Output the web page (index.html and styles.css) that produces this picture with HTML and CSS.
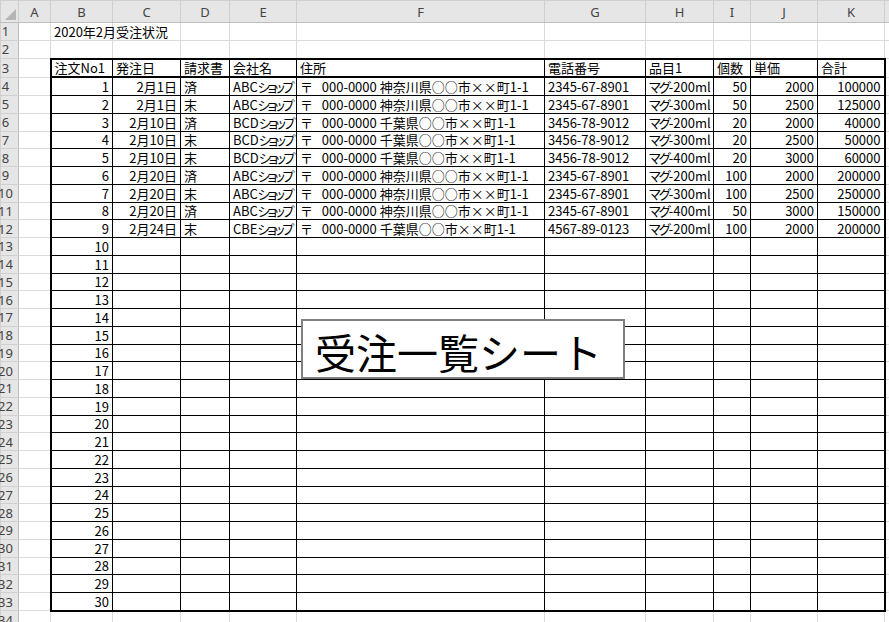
FILE: index.html
```html
<!DOCTYPE html>
<html lang="ja">
<head>
<meta charset="utf-8">
<link rel="stylesheet" href="styles.css">
</head>
<body>
<div class="sheet">
<table class="grid">
<colgroup>
<col class="c-rh"><col class="c-a"><col class="c-b"><col class="c-c"><col class="c-d"><col class="c-e"><col class="c-f"><col class="c-g"><col class="c-h"><col class="c-i"><col class="c-j"><col class="c-k"><col class="c-l">
</colgroup>
<tr class="hdr">
<th class="corner"><span class="tri"></span></th><th>A</th><th>B</th><th>C</th><th>D</th><th>E</th><th>F</th><th>G</th><th>H</th><th>I</th><th>J</th><th>K</th><th></th>
</tr>
<tr><th class="rh"><span>1</span></th><td></td><td class="l">2020年2月受注状況</td><td></td><td></td><td></td><td></td><td></td><td></td><td></td><td></td><td></td><td></td></tr>
<tr><th class="rh"><span>2</span></th><td></td><td></td><td></td><td></td><td></td><td></td><td></td><td></td><td></td><td></td><td></td><td></td></tr>
<tr class="head"><th class="rh"><span>3</span></th><td></td><td class="t l first">注文No1</td><td class="t l">発注日</td><td class="t l">請求書</td><td class="t l">会社名</td><td class="t l">住所</td><td class="t l">電話番号</td><td class="t l">品目1</td><td class="t l">個数</td><td class="t l">単価</td><td class="t l last">合計</td><td></td></tr>
<tr><th class="rh"><span>4</span></th><td></td><td class="t r first">1</td><td class="t r">2月1日</td><td class="t l">済</td><td class="t l">ABC<span class="kana">ショップ</span></td><td class="t l">〒&nbsp;&nbsp;&nbsp;000-0000 神奈川県○○市××町1-1</td><td class="t l">2345-67-8901</td><td class="t l"><span class="kana2">マグ</span>-200ml</td><td class="t r">50</td><td class="t r">2000</td><td class="t r last">100000</td><td></td></tr>
<tr><th class="rh"><span>5</span></th><td></td><td class="t r first">2</td><td class="t r">2月1日</td><td class="t l">末</td><td class="t l">ABC<span class="kana">ショップ</span></td><td class="t l">〒&nbsp;&nbsp;&nbsp;000-0000 神奈川県○○市××町1-1</td><td class="t l">2345-67-8901</td><td class="t l"><span class="kana2">マグ</span>-300ml</td><td class="t r">50</td><td class="t r">2500</td><td class="t r last">125000</td><td></td></tr>
<tr><th class="rh"><span>6</span></th><td></td><td class="t r first">3</td><td class="t r">2月10日</td><td class="t l">済</td><td class="t l">BCD<span class="kana">ショップ</span></td><td class="t l">〒&nbsp;&nbsp;&nbsp;000-0000 千葉県○○市××町1-1</td><td class="t l">3456-78-9012</td><td class="t l"><span class="kana2">マグ</span>-200ml</td><td class="t r">20</td><td class="t r">2000</td><td class="t r last">40000</td><td></td></tr>
<tr><th class="rh"><span>7</span></th><td></td><td class="t r first">4</td><td class="t r">2月10日</td><td class="t l">末</td><td class="t l">BCD<span class="kana">ショップ</span></td><td class="t l">〒&nbsp;&nbsp;&nbsp;000-0000 千葉県○○市××町1-1</td><td class="t l">3456-78-9012</td><td class="t l"><span class="kana2">マグ</span>-300ml</td><td class="t r">20</td><td class="t r">2500</td><td class="t r last">50000</td><td></td></tr>
<tr><th class="rh"><span>8</span></th><td></td><td class="t r first">5</td><td class="t r">2月10日</td><td class="t l">末</td><td class="t l">BCD<span class="kana">ショップ</span></td><td class="t l">〒&nbsp;&nbsp;&nbsp;000-0000 千葉県○○市××町1-1</td><td class="t l">3456-78-9012</td><td class="t l"><span class="kana2">マグ</span>-400ml</td><td class="t r">20</td><td class="t r">3000</td><td class="t r last">60000</td><td></td></tr>
<tr><th class="rh"><span>9</span></th><td></td><td class="t r first">6</td><td class="t r">2月20日</td><td class="t l">済</td><td class="t l">ABC<span class="kana">ショップ</span></td><td class="t l">〒&nbsp;&nbsp;&nbsp;000-0000 神奈川県○○市××町1-1</td><td class="t l">2345-67-8901</td><td class="t l"><span class="kana2">マグ</span>-200ml</td><td class="t r">100</td><td class="t r">2000</td><td class="t r last">200000</td><td></td></tr>
<tr><th class="rh"><span>10</span></th><td></td><td class="t r first">7</td><td class="t r">2月20日</td><td class="t l">末</td><td class="t l">ABC<span class="kana">ショップ</span></td><td class="t l">〒&nbsp;&nbsp;&nbsp;000-0000 神奈川県○○市××町1-1</td><td class="t l">2345-67-8901</td><td class="t l"><span class="kana2">マグ</span>-300ml</td><td class="t r">100</td><td class="t r">2500</td><td class="t r last">250000</td><td></td></tr>
<tr><th class="rh"><span>11</span></th><td></td><td class="t r first">8</td><td class="t r">2月20日</td><td class="t l">済</td><td class="t l">ABC<span class="kana">ショップ</span></td><td class="t l">〒&nbsp;&nbsp;&nbsp;000-0000 神奈川県○○市××町1-1</td><td class="t l">2345-67-8901</td><td class="t l"><span class="kana2">マグ</span>-400ml</td><td class="t r">50</td><td class="t r">3000</td><td class="t r last">150000</td><td></td></tr>
<tr><th class="rh"><span>12</span></th><td></td><td class="t r first">9</td><td class="t r">2月24日</td><td class="t l">末</td><td class="t l">CBE<span class="kana">ショップ</span></td><td class="t l">〒&nbsp;&nbsp;&nbsp;000-0000 千葉県○○市××町1-1</td><td class="t l">4567-89-0123</td><td class="t l"><span class="kana2">マグ</span>-200ml</td><td class="t r">100</td><td class="t r">2000</td><td class="t r last">200000</td><td></td></tr>
<tr><th class="rh"><span>13</span></th><td></td><td class="t r first">10</td><td class="t"></td><td class="t"></td><td class="t"></td><td class="t"></td><td class="t"></td><td class="t"></td><td class="t"></td><td class="t"></td><td class="t last"></td><td></td></tr>
<tr><th class="rh"><span>14</span></th><td></td><td class="t r first">11</td><td class="t"></td><td class="t"></td><td class="t"></td><td class="t"></td><td class="t"></td><td class="t"></td><td class="t"></td><td class="t"></td><td class="t last"></td><td></td></tr>
<tr><th class="rh"><span>15</span></th><td></td><td class="t r first">12</td><td class="t"></td><td class="t"></td><td class="t"></td><td class="t"></td><td class="t"></td><td class="t"></td><td class="t"></td><td class="t"></td><td class="t last"></td><td></td></tr>
<tr><th class="rh"><span>16</span></th><td></td><td class="t r first">13</td><td class="t"></td><td class="t"></td><td class="t"></td><td class="t"></td><td class="t"></td><td class="t"></td><td class="t"></td><td class="t"></td><td class="t last"></td><td></td></tr>
<tr><th class="rh"><span>17</span></th><td></td><td class="t r first">14</td><td class="t"></td><td class="t"></td><td class="t"></td><td class="t"></td><td class="t"></td><td class="t"></td><td class="t"></td><td class="t"></td><td class="t last"></td><td></td></tr>
<tr><th class="rh"><span>18</span></th><td></td><td class="t r first">15</td><td class="t"></td><td class="t"></td><td class="t"></td><td class="t"></td><td class="t"></td><td class="t"></td><td class="t"></td><td class="t"></td><td class="t last"></td><td></td></tr>
<tr><th class="rh"><span>19</span></th><td></td><td class="t r first">16</td><td class="t"></td><td class="t"></td><td class="t"></td><td class="t"></td><td class="t"></td><td class="t"></td><td class="t"></td><td class="t"></td><td class="t last"></td><td></td></tr>
<tr><th class="rh"><span>20</span></th><td></td><td class="t r first">17</td><td class="t"></td><td class="t"></td><td class="t"></td><td class="t"></td><td class="t"></td><td class="t"></td><td class="t"></td><td class="t"></td><td class="t last"></td><td></td></tr>
<tr><th class="rh"><span>21</span></th><td></td><td class="t r first">18</td><td class="t"></td><td class="t"></td><td class="t"></td><td class="t"></td><td class="t"></td><td class="t"></td><td class="t"></td><td class="t"></td><td class="t last"></td><td></td></tr>
<tr><th class="rh"><span>22</span></th><td></td><td class="t r first">19</td><td class="t"></td><td class="t"></td><td class="t"></td><td class="t"></td><td class="t"></td><td class="t"></td><td class="t"></td><td class="t"></td><td class="t last"></td><td></td></tr>
<tr><th class="rh"><span>23</span></th><td></td><td class="t r first">20</td><td class="t"></td><td class="t"></td><td class="t"></td><td class="t"></td><td class="t"></td><td class="t"></td><td class="t"></td><td class="t"></td><td class="t last"></td><td></td></tr>
<tr><th class="rh"><span>24</span></th><td></td><td class="t r first">21</td><td class="t"></td><td class="t"></td><td class="t"></td><td class="t"></td><td class="t"></td><td class="t"></td><td class="t"></td><td class="t"></td><td class="t last"></td><td></td></tr>
<tr><th class="rh"><span>25</span></th><td></td><td class="t r first">22</td><td class="t"></td><td class="t"></td><td class="t"></td><td class="t"></td><td class="t"></td><td class="t"></td><td class="t"></td><td class="t"></td><td class="t last"></td><td></td></tr>
<tr><th class="rh"><span>26</span></th><td></td><td class="t r first">23</td><td class="t"></td><td class="t"></td><td class="t"></td><td class="t"></td><td class="t"></td><td class="t"></td><td class="t"></td><td class="t"></td><td class="t last"></td><td></td></tr>
<tr><th class="rh"><span>27</span></th><td></td><td class="t r first">24</td><td class="t"></td><td class="t"></td><td class="t"></td><td class="t"></td><td class="t"></td><td class="t"></td><td class="t"></td><td class="t"></td><td class="t last"></td><td></td></tr>
<tr><th class="rh"><span>28</span></th><td></td><td class="t r first">25</td><td class="t"></td><td class="t"></td><td class="t"></td><td class="t"></td><td class="t"></td><td class="t"></td><td class="t"></td><td class="t"></td><td class="t last"></td><td></td></tr>
<tr><th class="rh"><span>29</span></th><td></td><td class="t r first">26</td><td class="t"></td><td class="t"></td><td class="t"></td><td class="t"></td><td class="t"></td><td class="t"></td><td class="t"></td><td class="t"></td><td class="t last"></td><td></td></tr>
<tr><th class="rh"><span>30</span></th><td></td><td class="t r first">27</td><td class="t"></td><td class="t"></td><td class="t"></td><td class="t"></td><td class="t"></td><td class="t"></td><td class="t"></td><td class="t"></td><td class="t last"></td><td></td></tr>
<tr><th class="rh"><span>31</span></th><td></td><td class="t r first">28</td><td class="t"></td><td class="t"></td><td class="t"></td><td class="t"></td><td class="t"></td><td class="t"></td><td class="t"></td><td class="t"></td><td class="t last"></td><td></td></tr>
<tr><th class="rh"><span>32</span></th><td></td><td class="t r first">29</td><td class="t"></td><td class="t"></td><td class="t"></td><td class="t"></td><td class="t"></td><td class="t"></td><td class="t"></td><td class="t"></td><td class="t last"></td><td></td></tr>
<tr class="bottom"><th class="rh"><span>33</span></th><td></td><td class="t r first">30</td><td class="t"></td><td class="t"></td><td class="t"></td><td class="t"></td><td class="t"></td><td class="t"></td><td class="t"></td><td class="t"></td><td class="t last"></td><td></td></tr>
<tr><th class="rh"><span>34</span></th><td></td><td></td><td></td><td></td><td></td><td></td><td></td><td></td><td></td><td></td><td></td><td></td></tr>
</table>
<div class="textbox">受注一覧シート</div>
</div>
</body>
</html>
```

FILE: styles.css
```css
html, body {
  margin: 0;
  padding: 0;
  background: #ffffff;
  overflow: hidden;
}
body {
  font-family: "Noto Sans CJK JP", "Noto Sans", sans-serif;
  font-size: 13px;
  color: #000;
}
.sheet {
  position: relative;
  width: 889px;
  height: 622px;
  overflow: hidden;
}
.grid {
  border-collapse: collapse;
  table-layout: fixed;
  width: 924px;
}
.c-rh { width: 18px; }
.c-a { width: 32px; }
.c-b { width: 62px; }
.c-c { width: 68px; }
.c-d { width: 49px; }
.c-e { width: 67px; }
.c-f { width: 248px; }
.c-g { width: 101px; }
.c-h { width: 68px; }
.c-i { width: 37px; }
.c-j { width: 67px; }
.c-k { width: 67px; }
.c-l { width: 40px; }

.grid tr { height: 17.75px; }
.grid td {
  border: 1px solid #dadada;
  padding: 0 3px;
  white-space: nowrap;
  overflow: visible;
  vertical-align: bottom;
  line-height: 16px;
  height: 16.75px;
}
.grid td.l { text-align: left; }
.grid td.r { text-align: right; }
.kana {
  font-feature-settings: "palt";
  letter-spacing: -2.4px;
}
.kana2 {
  font-feature-settings: "palt";
  letter-spacing: -1.8px;
}

.grid tr.hdr { height: 22px; }
.grid tr.hdr th {
  background: #e6e6e6;
  border: 1px solid #cfcfcf;
  border-bottom-color: #bdbdbd;
  font-family: "Noto Sans", "Liberation Sans", sans-serif;
  font-weight: normal;
  font-size: 13px;
  color: #444;
  padding: 0;
  line-height: 20px;
  height: 21px;
}
.grid th.corner {
  position: relative;
}
.tri {
  position: absolute;
  right: 2px;
  bottom: 2px;
  width: 0;
  height: 0;
  border-left: 11px solid transparent;
  border-bottom: 11px solid #b4b4b4;
}
.grid th.rh {
  background: #e6e6e6;
  border: 1px solid #d0d0d0;
  border-right-color: #bdbdbd;
  font-family: "Noto Sans", "Liberation Sans", sans-serif;
  font-weight: normal;
  font-size: 13px;
  color: #444;
  padding: 0;
  line-height: 16px;
}
.grid th.rh span {
  display: flex;
  justify-content: center;
  width: 9px;
}

.grid td.t {
  border: 1px solid #000;
}
.grid td.first { border-left: 2px solid #000; }
.grid td.last { border-right: 2px solid #000; }
.grid tr.head td.t { border-top: 2px solid #000; border-bottom: 2px solid #000; }
.grid tr.bottom td.t { border-bottom: 2px solid #000; }

.textbox {
  position: absolute;
  left: 301px;
  top: 319px;
  width: 324px;
  height: 60px;
  box-sizing: border-box;
  border: 2px solid #808080;
  background: #fff;
  font-family: "Noto Sans CJK JP", sans-serif;
  font-size: 41px;
  line-height: 56px;
  padding-left: 12px;
  padding-top: 2px;
  color: #000;
  white-space: nowrap;
}
```
